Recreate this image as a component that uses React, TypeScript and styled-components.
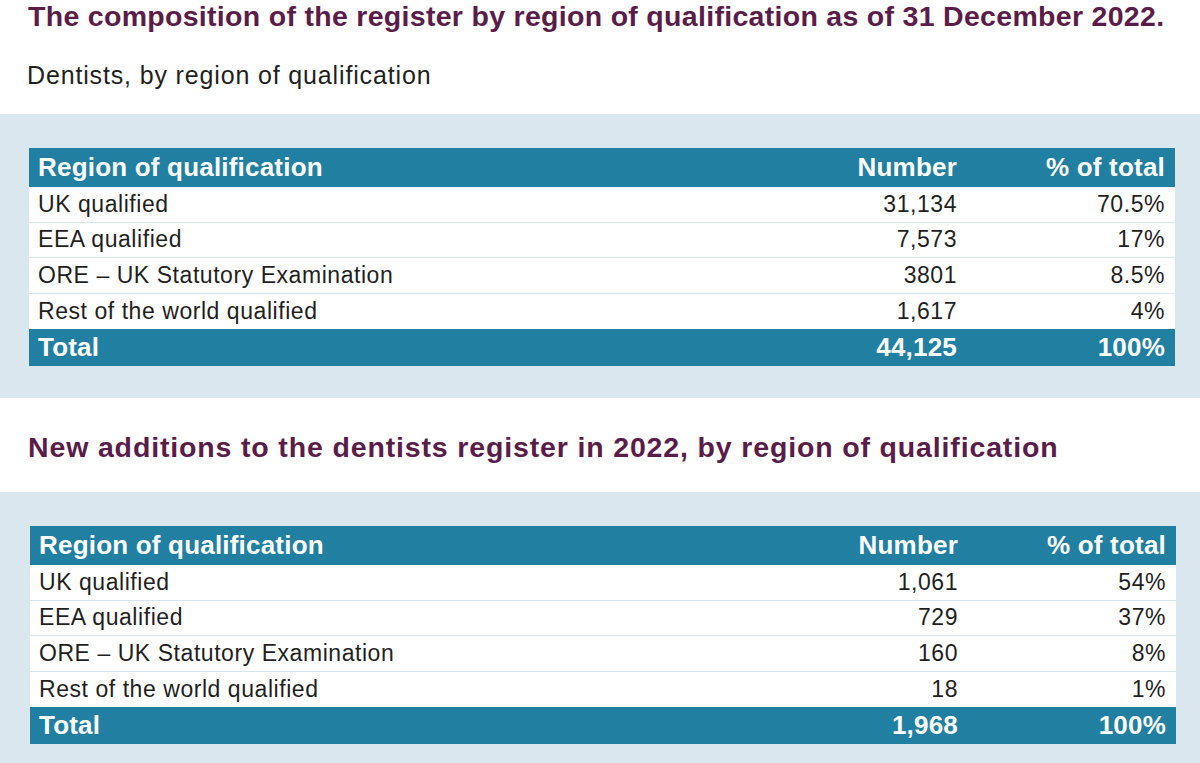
import React from 'react';
import styled, { createGlobalStyle } from 'styled-components';

const GlobalStyle = createGlobalStyle`
  html, body {
    margin: 0;
    padding: 0;
    background: #ffffff;
  }
  body {
    font-family: "Liberation Sans", Arial, sans-serif;
    color: #1a1a1a;
  }
`;

/**
 * Data
 */
interface Row {
  region: string;
  number: string;
  percent: string;
}

interface TableData {
  rows: Row[];
  total: Row;
}

const registerTable: TableData = {
  rows: [
    { region: 'UK qualified', number: '31,134', percent: '70.5%' },
    { region: 'EEA qualified', number: '7,573', percent: '17%' },
    { region: 'ORE – UK Statutory Examination', number: '3801', percent: '8.5%' },
    { region: 'Rest of the world qualified', number: '1,617', percent: '4%' },
  ],
  total: { region: 'Total', number: '44,125', percent: '100%' },
};

const additionsTable: TableData = {
  rows: [
    { region: 'UK qualified', number: '1,061', percent: '54%' },
    { region: 'EEA qualified', number: '729', percent: '37%' },
    { region: 'ORE – UK Statutory Examination', number: '160', percent: '8%' },
    { region: 'Rest of the world qualified', number: '18', percent: '1%' },
  ],
  total: { region: 'Total', number: '1,968', percent: '100%' },
};

/**
 * Styling
 */
const Page = styled.main`
  width: 1200px;
  display: flex;
  flex-direction: column;
`;

const Heading = styled.h2<{ $top: number; $bottom: number; $spacing: number }>`
  margin: ${(p) => p.$top}px 0 ${(p) => p.$bottom}px;
  padding: 0 28px;
  font-size: 28.5px;
  line-height: 34px;
  font-weight: 700;
  color: #5a1d4a;
  letter-spacing: ${(p) => p.$spacing}px;
`;

const Subheading = styled.p`
  margin: 0 0 24px;
  padding: 0 27px;
  font-size: 25px;
  line-height: 30px;
  font-weight: 400;
  letter-spacing: 0.85px;
  color: #1f1f1f;
`;

const Panel = styled.section<{ $left: number; $bottom: number }>`
  background: #dbe7ef;
  padding: 34px 0 ${(p) => p.$bottom}px ${(p) => p.$left}px;
`;

const Table = styled.div`
  display: grid;
  grid-template-columns: 1fr 210px 208px;
  width: 1146px;
`;

type CellKind = 'head' | 'body' | 'total';

const Cell = styled.div<{ $kind: CellKind; $align?: 'left' | 'right'; $last?: boolean }>`
  display: flex;
  align-items: center;
  justify-content: ${(p) => (p.$align === 'right' ? 'flex-end' : 'flex-start')};
  height: ${(p) => (p.$kind === 'head' ? 39 : p.$kind === 'total' ? 37 : 35.5)}px;
  box-sizing: border-box;
  padding: ${(p) => (p.$align === 'right' ? '0 10px 0 0' : '0 0 0 9px')};
  background: ${(p) => (p.$kind === 'body' ? '#ffffff' : '#217fa1')};
  color: ${(p) => (p.$kind === 'body' ? '#1f1f1f' : '#ffffff')};
  font-size: ${(p) => (p.$kind === 'body' ? '23px' : '26px')};
  font-weight: ${(p) => (p.$kind === 'body' ? 400 : 700)};
  letter-spacing: ${(p) => (p.$kind === 'body' ? '0.55px' : '0.2px')};
  border-bottom: ${(p) => (p.$kind === 'body' && !p.$last ? '1.5px solid #d6e5ee' : 'none')};
  white-space: nowrap;
`;

interface RegionTableProps {
  data: TableData;
}

const RegionTable = ({ data }: RegionTableProps) => (
  <Table>
    <Cell $kind="head">Region of qualification</Cell>
    <Cell $kind="head" $align="right">Number</Cell>
    <Cell $kind="head" $align="right">% of total</Cell>
    {data.rows.map((row, i) => {
      const last = i === data.rows.length - 1;
      return (
        <React.Fragment key={row.region}>
          <Cell $kind="body" $last={last}>{row.region}</Cell>
          <Cell $kind="body" $last={last} $align="right">{row.number}</Cell>
          <Cell $kind="body" $last={last} $align="right">{row.percent}</Cell>
        </React.Fragment>
      );
    })}
    <Cell $kind="total">{data.total.region}</Cell>
    <Cell $kind="total" $align="right">{data.total.number}</Cell>
    <Cell $kind="total" $align="right">{data.total.percent}</Cell>
  </Table>
);

export default function App() {
  return (
    <>
      <GlobalStyle />
      <Page>
        <Heading $top={-1} $bottom={27} $spacing={0.3}>
          The composition of the register by region of qualification as of 31 December 2022.
        </Heading>
        <Subheading>Dentists, by region of qualification</Subheading>
        <Panel $left={29} $bottom={32}>
          <RegionTable data={registerTable} />
        </Panel>
        <Heading $top={32} $bottom={28} $spacing={0.85}>
          New additions to the dentists register in 2022, by region of qualification
        </Heading>
        <Panel $left={30} $bottom={30}>
          <RegionTable data={additionsTable} />
        </Panel>
      </Page>
    </>
  );
}
